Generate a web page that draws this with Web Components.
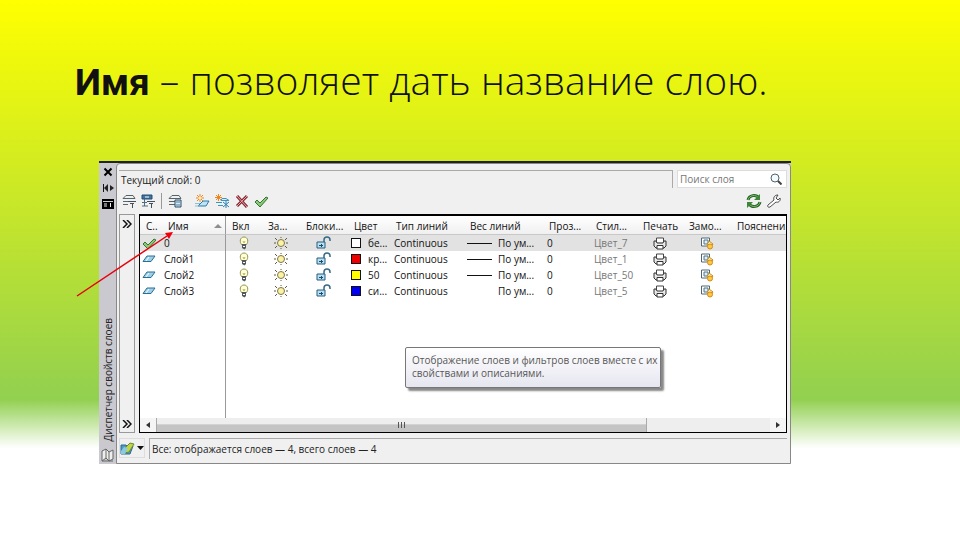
<!DOCTYPE html>
<html lang="ru">
<head>
<meta charset="utf-8">
<title>Диспетчер свойств слоев</title>
<style>
    html { min-height: 100%; background: linear-gradient(#ffff00 0%, #92d050 74%, #ffffff 83%) no-repeat white; }
    body { margin: 0; }
    b { font-family: Roboto, sans-serif; font-size: 37px; font-weight: 700; line-height: 1; }
</style>
</head>
<body>
<slide-page>
    <span slot="title"><b>Имя</b> – позволяет дать название слою.</span>
    <layer-manager current="0" status="Все: отображается слоев — 4, всего слоев — 4">
        <layer-table></layer-table>
        <hint-tip slot="tip">Отображение слоев и фильтров слоев вместе с их свойствами и описаниями.</hint-tip>
    </layer-manager>
</slide-page>

<script>
// Набор иконок панели
const ICONS = {
    close: ['0 0 10 10', '<path d="M1.5 1.5l7 7M8.500 1.500l-7 7" stroke="#000" stroke-width="2"/>'],
    dock: ['0 0 12 10', '<path d="M1.500 1v8" stroke="#111"/><path d="M6 1v8L2 5zM8 2v6l4-3z" fill="#222"/>'],
    menu: ['0 0 12 10', '<path d="M0 0h12v10H0z" fill="#000"/><path d="M1 2.500h10" stroke="#ccc"/><path d="M2 4h3v4H2z" fill="#777"/><path d="M8.500 4v4" stroke="#eee"/>'],
    stack: ['0 0 14 14', '<path d="M1 7.500h5M1 10.500h5" stroke="#5b666d"/><path d="M4 1.500h7l2 3H1z" fill="#eef1f2" stroke="#566168"/><path d="M6 7.500h8M8 9.500h4M10.500 9v5" stroke="#41505b"/>'],
    states: ['0 0 14 14', '<path d="M1 1h10v4H1z" fill="#3f73a0" stroke="#244c70"/><path d="M4 3h4" stroke="#fff"/><path d="M3.500 5v7M1 8.500h5M1 12h6" stroke="#526a7d"/><path d="M6 7.500h8M8 9.500h4M10.500 9v5" stroke="#41505b"/>'],
    stateman: ['0 0 14 14', '<path d="M4 1.500h7l2 3H1zM1 7.500h6M1 10.500h6" fill="#eef1f2" stroke="#566168"/><path d="M7 6h6v7H7z" fill="#d8e8f2" stroke="#284b67"/><path d="M8 8h4M8 11h4" stroke="#477b9f"/>'],
    add: ['0 0 15 14', '<path d="M3 12l5-5h6l-3 5z" fill="#bfe3f4" stroke="#287bad"/><path d="M0 9.500h5M0 12h4" stroke="#8abdd6"/><path d="M5 0v8M1 4h8M2 1l6 6M8 1L2 7" stroke="#ed861f"/><circle cx="5" cy="4" r="1.500" fill="#fff0bb"/>'],
    freeze: ['0 0 15 14', '<path d="M3.500 0v7M0 3.500h7M1 1l5 5M6 1L1 6" stroke="#ed861f"/><path d="M7 4.500h4l3 2H6zM1 8.500h6M3 11.500h5" fill="#d7eef8" stroke="#3e94c0"/><path d="M11 7v7M8 8l6 5M14 8l-6 5" stroke="#2e83b5"/>'],
    remove: ['0 0 14 14', '<path d="M2 2l10 11M12 2L2 12" stroke="#842b35" stroke-width="3"/><path d="M2 2l10 11M12 2L2 12" stroke="#f0a0a8"/>'],
    check: ['0 0 14 14', '<path d="M1 8l2-2 3 3 6-6 2 1-8 9z" fill="#8cc878" stroke="#33762e"/>'],
    refresh: ['0 0 16 14', '<path d="M2 6C3 1 10 0 13 4M14 8c-1 5-8 6-11 2" stroke="#27652a" stroke-width="3"/><path d="M2 6C3 1 10 0 13 4M14 8c-1 5-8 6-11 2" stroke="#83bd68"/><path d="M14 0v6H8zM1 14V8h6z" fill="#3e8739"/>'],
    wrench: ['0 0 14 14', '<path d="M1 11l6-5c-1-3 1-5 4-5L9 4l2 2 2-2c1 3-2 5-4 4l-6 5c-2 1-3-1-2-2z" fill="#fff" stroke="#4c4c4c"/>'],
    search: ['0 0 12 12', '<circle cx="5" cy="5" r="4" fill="#f3fbff" stroke="#52626b"/><path d="M8 8l3.500 3.500" stroke="#444" stroke-width="2"/>'],
    chevrons: ['0 0 10 8', '<path d="M1 0l4 4-4 4M5 0l4 4-4 4" stroke="#111" stroke-width="1.500"/>'],
    sheet: ['0 0 14 8', '<path d="M1 6.500L5 1h8L9 6.500z" fill="#9fcfe8" stroke="#287093"/><path d="M4 6l3-4" stroke="#fff"/>'],
    bulb: ['0 0 10 14', '<path d="M3 9C0 6 1 1 5 1s5 5 2 8z" fill="#ffffcf" stroke="#91935b"/><path d="M4 5l1 2 1-2" stroke="#b8b36b"/><path d="M3 8h4v4L5.500 13.500 3 12z" fill="#535a5c"/><path d="M4 10.500h2" stroke="#fff"/>'],
    sun: ['0 0 14 12', '<path d="M1 1l2 2M13 1l-2 2M1 11l2-2M13 11l-2-2M0 6h2M12 6h2M7 0v1M7 11v1" stroke="#5f5a45"/><circle cx="7" cy="6" r="3.500" fill="#fbf2a6" stroke="#7d7648"/>'],
    lock: ['0 0 16 14', '<path d="M1 6h8v6H1z" fill="#b9e0f2" stroke="#245c80"/><path d="M8 6V4c0-4 6-4 6 0v1" stroke="#386a87" stroke-width="1.500"/><path d="M3 9.500h4M5.500 8v3" stroke="#194b6b"/>'],
    printer: ['0 0 14 13', '<path d="M3.500 5V1h7v4" fill="#fff" stroke="#444"/><path d="M1 4h2l1 2h6l1-2h2v5l-2 2H3L1 9z" fill="#e9e9e9" stroke="#303030"/><path d="M4 8.500h6v3.500H4z" fill="#fff" stroke="#303030"/>'],
    viewport: ['0 0 14 13', '<path d="M1.500 1h8v8h-8z" fill="#fff" stroke="#506778"/><path d="M4 3h4v4H4z" fill="#dfeef7" stroke="#4c748d"/><path d="M9 4l4 3-3 4-3-3z" fill="#fff1ae" stroke="#c88918"/><circle cx="10" cy="9.500" r="2.500" fill="#ffc83e" stroke="#d18b19"/>'],
    filter: ['0 0 15 14', '<path d="M1 4h5l1 1h6l-3 8H1z" fill="#4d9bc3" stroke="#286b8f"/><path d="M5 7l5-5 4 1-5 8-5 1z" fill="#c5d444" stroke="#6a8b2d"/><path d="M1 10l3-4 4 1-3 6H1z" fill="#8bc8e2"/>'],
    pages: ['0 0 13 14', '<path d="M1 3l4-2v9l-4 3zM5 1l3 3v9l-3-3M8 4l4-2v9l-4 2M1 13h11" fill="#eee" stroke="#666"/>'],
    left: ['0 0 4 6', '<path d="M4 0v6L0 3z" fill="#333"/>'],
    right: ['0 0 4 6', '<path d="M0 0v6l4-3z" fill="#333"/>'],
    down: ['0 0 7 4', '<path d="M0 0h7L3.500 4z" fill="#111"/>'],
    sort: ['0 0 8 4', '<path d="M0 4h8L4 0z" fill="#8d8d8d"/>']
};

class LayerIcon extends HTMLElement {
    constructor() {
        super();
        this.attachShadow({ mode: 'open' });
    }
    connectedCallback() {
        const [box, body] = ICONS[this.getAttribute('name')];
        const [, , w, h] = box.split(' ');
        this.shadowRoot.innerHTML = `
            <style>
                :host { display: block; flex: none; line-height: 0; }
                svg { display: block; margin: 0 auto; }
            </style>
            <svg width="${w}" height="${h}" viewBox="${box}" fill="none" aria-hidden="true">${body}</svg>
        `;
    }
}
customElements.define('layer-icon', LayerIcon);

class SlidePage extends HTMLElement {
    constructor() {
        super();
        this.attachShadow({ mode: 'open' });
    }
    connectedCallback() {
        this.shadowRoot.innerHTML = `
            <style>
                :host { display: block; padding: 52px 169px 75px 75px; font-family: 'Open Sans', 'Noto Sans', sans-serif; }
                h1 { margin: 0 -80px 53px 0; font-size: 39px; line-height: 56px; font-weight: 300; color: #111; }
                .content { margin-left: 24px; }
            </style>
            <h1><slot name="title"></slot></h1>
            <div class="content"><slot></slot></div>
        `;
    }
}
customElements.define('slide-page', SlidePage);

class HintTip extends HTMLElement {
    constructor() {
        super();
        this.attachShadow({ mode: 'open' });
    }
    connectedCallback() {
        this.shadowRoot.innerHTML = `
            <style>
                :host { display: block; box-sizing: border-box; width: 256px; padding: 6px 0 7px 6px; border: 1px solid #777; border-radius: 2px; background: linear-gradient(#fff, #e6e6f0); box-shadow: 3px 3px 2px #888; font-size: 10px; line-height: 13px; color: #575757; }
            </style>
            <slot></slot>
        `;
    }
}
customElements.define('hint-tip', HintTip);

const HEADS = ['С..', 'Имя', 'Вкл', 'За...', 'Блоки...', 'Цвет', 'Тип линий', 'Вес линий', 'Проз...', 'Стил...', 'Печать', 'Замо...', 'Пояснени'];
const WIDTHS = [22, 64, 36, 38, 48, 42, 74, 79, 47, 47, 46, 48];
const LAYERS = [
    { name: '0', color: '#ffffff', label: 'бе...', style: 'Цвет_7', line: true, current: true },
    { name: 'Слой1', color: '#ee0000', label: 'кр...', style: 'Цвет_1', line: true },
    { name: 'Слой2', color: '#ffff00', label: '50', style: 'Цвет_50', line: true },
    { name: 'Слой3', color: '#0000ee', label: 'си...', style: 'Цвет_5' }
];

class LayerTable extends HTMLElement {
    constructor() {
        super();
        this.attachShadow({ mode: 'open' });
    }
    row(layer) {
        return `
            <tr class="${layer.current ? 'current' : ''}">
                <td class="icon"><layer-icon name="${layer.current ? 'check' : 'sheet'}"></layer-icon></td>
                <td class="name">${layer.name}</td>
                <td class="icon"><layer-icon name="bulb"></layer-icon></td>
                <td class="icon"><layer-icon name="sun"></layer-icon></td>
                <td class="icon"><layer-icon name="lock"></layer-icon></td>
                <td class="color"><span class="pair"><i class="swatch" style="background:${layer.color}"></i>${layer.label}</span></td>
                <td>Continuous</td>
                <td class="weight"><span class="pair"><i class="${layer.line ? 'line' : 'line none'}"></i>По ум...</span></td>
                <td>0</td>
                <td class="dim">${layer.style}</td>
                <td class="icon"><layer-icon name="printer"></layer-icon></td>
                <td class="icon"><layer-icon name="viewport"></layer-icon></td>
                <td></td>
            </tr>`;
    }
    render() {
        this.shadowRoot.innerHTML = `
            <style>
                :host { display: flex; flex-direction: column; flex: 1; min-width: 0; border: 1px solid #000; border-top-width: 2px; background: white; }
                .view { flex: 1; display: flex; flex-direction: column; overflow: hidden; }
                table { width: 100%; table-layout: fixed; border-collapse: separate; border-spacing: 0; font-size: 10px; line-height: 16px; color: #111; }
                th, td { padding: 0 0 0 4px; height: 16px; text-align: left; font-weight: 400; white-space: nowrap; overflow: hidden; }
                th { height: 16px; padding: 2px 0 0 6px; background: linear-gradient(#fff, #f0f0f0); border-bottom: 1px solid #c8c8c8; }
                td.name { padding-left: 2px; }
                td.color, td.weight { padding-left: 3px; }
                td.icon { padding: 0; }
                td:first-child { padding-right: 4px; }
                th:nth-child(2), td:nth-child(2) { border-right: 1px solid #999; }
                th .pair { justify-content: space-between; padding-right: 3px; }
                .current { background: #e2e2e2; }
                .pair { display: flex; align-items: center; }
                .swatch { width: 8px; height: 8px; border: 1px solid #111; margin-right: 7px; }
                .line { width: 25px; height: 1px; background: #111; margin-right: 6px; }
                .none { background: none; }
                .dim { color: #777; }
                .rest { flex: 1; width: 85px; border-right: 1px solid #999; }
                .scroll { display: flex; height: 14px; background: #eee; }
                .scroll button { width: 16px; padding: 0; border: 0; display: grid; place-items: center; background: #f5f5f5; }
                .thumb { flex: 490; border: 1px solid #aaa; border-width: 0 1px; background: linear-gradient(#eee 40%, #c4c4c4 50%); display: grid; place-items: center; }
                .grip { width: 5px; height: 6px; border: 1px solid #555; border-width: 0 1px; background: linear-gradient(90deg, transparent 2px, #555 2px, #555 3px, transparent 3px); }
                .track { flex: 123; }
            </style>
            <div class="view">
                <table>
                    <colgroup>${WIDTHS.map(w => `<col style="width:${w}px">`).join('')}<col></colgroup>
                    <thead><tr>${HEADS.map((h, i) => `<th>${i === 1 ? `<span class="pair">${h}<layer-icon name="sort"></layer-icon></span>` : h}</th>`).join('')}</tr></thead>
                    <tbody>${LAYERS.map(l => this.row(l)).join('')}</tbody>
                </table>
                <div class="rest"></div>
            </div>
            <div class="scroll">
                <button aria-label="Влево"><layer-icon name="left"></layer-icon></button>
                <div class="thumb"><i class="grip"></i></div>
                <div class="track"></div>
                <button aria-label="Вправо"><layer-icon name="right"></layer-icon></button>
            </div>
        `;
    }
    connectedCallback() {
        this.render();
    }
}
customElements.define('layer-table', LayerTable);

class LayerManager extends HTMLElement {
    constructor() {
        super();
        this.attachShadow({ mode: 'open' });
    }
    connectedCallback() {
        this.shadowRoot.innerHTML = `
            <style>
                :host { display: flex; position: relative; border-top: 2px solid #222; background: #c9c9cf; font-size: 10px; line-height: 16px; color: #222; }
                button { padding: 0; border: 0; background: none; font: inherit; color: inherit; display: grid; place-items: center; }
                .side { width: 17px; display: flex; flex-direction: column; align-items: center; gap: 6px; padding: 4px 0 2px; box-sizing: border-box; }
                .caption { margin-top: auto; writing-mode: vertical-rl; transform: rotate(180deg); white-space: nowrap; }
                .body { flex: 1; min-width: 0; border: 1px solid #888; border-radius: 4px 4px 0 0; background: #f0f0f0; padding: 0 3px 0 2px; }
                .top { display: flex; gap: 4px; margin-top: 6px; }
                .current { flex: 1; border: 1px solid #aaa; border-width: 1px 1px 0 0; height: 17px; line-height: 18px; padding-left: 2px; }
                .search { display: flex; align-items: center; width: 110px; height: 18px; box-sizing: border-box; padding: 0 4px 0 2px; background: #fff; border: 1px solid #ddd; }
                input { flex: 1; min-width: 0; padding: 0; border: 0; outline: 0; background: none; font: inherit; }
                input::placeholder { color: #777; opacity: 1; }
                .tools { display: flex; align-items: center; gap: 5px; height: 26px; padding: 0 6px 0 3px; }
                .tools hr { width: 1px; height: 16px; margin: 0 1px; border: 0; background: #999; }
                .tools .blank { background: none; }
                .tools .gap { flex: 1; }
                .main { display: flex; gap: 4px; height: 219px; }
                .strip { display: flex; flex-direction: column; justify-content: space-between; width: 16px; box-sizing: border-box; border: 1px solid #999; padding: 5px 1px 4px 0; }
                .foot { display: flex; gap: 4px; padding: 5px 0 4px; }
                .foot button { display: flex; align-items: center; justify-content: center; gap: 2px; width: 26px; height: 20px; border: 1px solid #ddd; box-sizing: border-box; }
                .status { flex: 1; border: 1px solid #aaa; border-width: 1px 0 0 1px; line-height: 20px; padding-left: 2px; }
                .tip { position: absolute; left: 306px; top: 184px; }
                .arrow { position: absolute; left: -24px; top: 67px; }
            </style>
            <div class="side">
                <button aria-label="Закрыть"><layer-icon name="close"></layer-icon></button>
                <button aria-label="Свернуть"><layer-icon name="dock"></layer-icon></button>
                <button aria-label="Меню"><layer-icon name="menu"></layer-icon></button>
                <span class="caption">Диспетчер свойств слоев</span>
                <layer-icon name="pages"></layer-icon>
            </div>
            <div class="body">
                <div class="top">
                    <div class="current">Текущий слой: ${this.getAttribute('current')}</div>
                    <label class="search"><input type="text" placeholder="Поиск слоя" aria-label="Поиск слоя"><layer-icon name="search"></layer-icon></label>
                </div>
                <div class="tools">
                    <button aria-label="Фильтр по свойствам"><layer-icon name="stack"></layer-icon></button>
                    <button aria-label="Групповой фильтр"><layer-icon name="states"></layer-icon></button>
                    <hr>
                    <button aria-label="Состояния слоев"><layer-icon name="stateman"></layer-icon></button>
                    <hr class="blank">
                    <button aria-label="Создать"><layer-icon name="add"></layer-icon></button>
                    <button aria-label="Создать замороженный"><layer-icon name="freeze"></layer-icon></button>
                    <button aria-label="Удалить"><layer-icon name="remove"></layer-icon></button>
                    <button aria-label="Установить"><layer-icon name="check"></layer-icon></button>
                    <span class="gap"></span>
                    <button aria-label="Обновить"><layer-icon name="refresh"></layer-icon></button>
                    <button aria-label="Параметры"><layer-icon name="wrench"></layer-icon></button>
                </div>
                <div class="main">
                    <div class="strip">
                        <button aria-label="Развернуть"><layer-icon name="chevrons"></layer-icon></button>
                        <button aria-label="Развернуть фильтры"><layer-icon name="chevrons"></layer-icon></button>
                    </div>
                    <slot></slot>
                </div>
                <div class="foot">
                    <button aria-label="Фильтры"><layer-icon name="filter"></layer-icon><layer-icon name="down"></layer-icon></button>
                    <div class="status">${this.getAttribute('status')}</div>
                </div>
            </div>
            <div class="tip"><slot name="tip"></slot></div>
            <svg class="arrow" width="100" height="70" viewBox="0 0 100 70" aria-hidden="true">
                <path d="M2 66L92 6" stroke="#e8000c" stroke-width="1.500"/>
                <path d="M98 2l-4 7-4-6z" fill="#f0000c"/>
            </svg>
        `;
    }
}
customElements.define('layer-manager', LayerManager);
</script>
</body>
</html>
